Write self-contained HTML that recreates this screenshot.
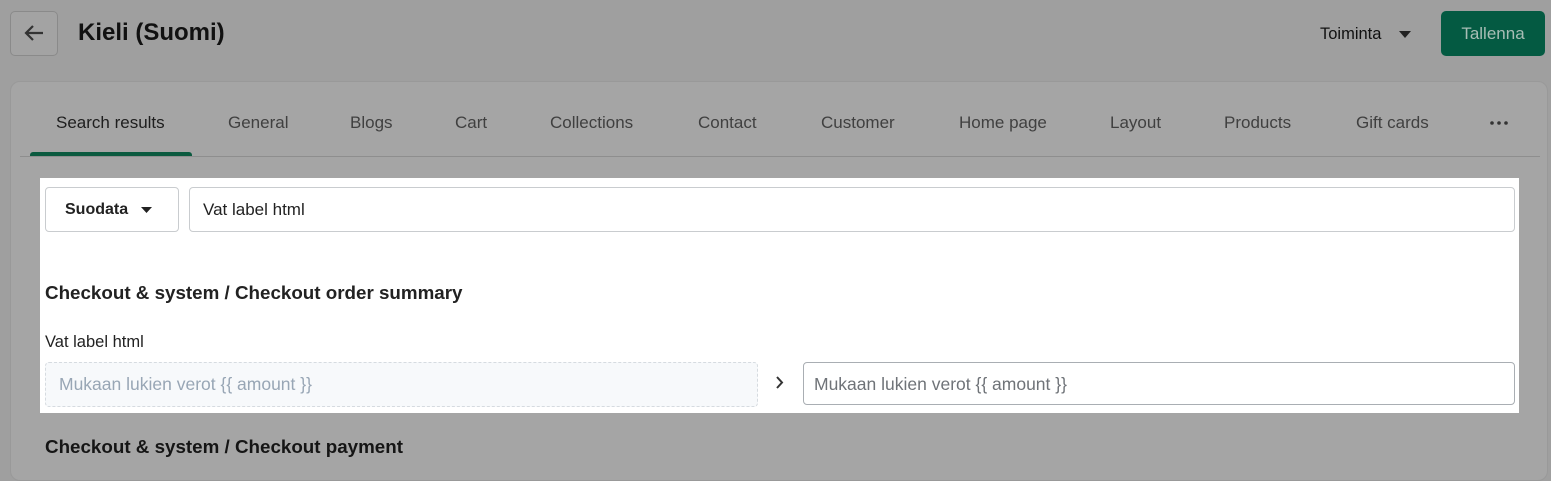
<!DOCTYPE html>
<html><head><meta charset="utf-8"><style>
*{box-sizing:border-box;margin:0;padding:0}
body{width:1551px;height:470px;overflow:hidden;background:#9f9f9f;font-family:"Liberation Sans",sans-serif;position:relative;color:#1a1a1a}
.a{position:absolute}
.back{left:10px;top:11px;width:48px;height:45px;border:1px solid #8a8a8a;border-radius:5px;background:#a3a3a3}
.title{left:78px;top:19px;font-size:24px;font-weight:bold;color:#111}
.card{left:10px;top:81px;width:1538px;height:400px;background:#a5a5a5;border-radius:10px;border:1px solid #999}
.tab{top:113px;font-size:17px;color:#404040}
.sel{left:30px;top:152px;width:162px;height:4px;background:#0b5a3f;border-radius:3px 3px 0 0}
.line{left:20px;top:156px;width:1520px;height:1px;background:#8e8e8e}
.hl{left:40px;top:178px;width:1479px;height:235px;background:#fff}
.box{border:1px solid #c9cccf;border-radius:4px;background:#fff}
</style></head><body>
<div class="a back"><svg width="46" height="43" viewBox="0 0 46 43"><path d="M32 21H15M22 14l-7 7 7 7" stroke="#333" stroke-width="2.2" fill="none"/></svg></div>
<div class="a title">Kieli (Suomi)</div>
<div class="a" style="left:1320px;top:25px;font-size:16.5px;color:#111">Toiminta</div>
<svg class="a" style="left:1399px;top:31px" width="12" height="7"><path d="M0 0h12L6 7z" fill="#222"/></svg>
<div class="a" style="left:1441px;top:11px;width:104px;height:45px;background:#045a42;border-radius:5px;color:#a8bdb5;font-size:17px;text-align:center;line-height:45px">Tallenna</div>
<div class="a card"></div>
<div class="a tab" style="left:56px;color:#1e1e1e">Search results</div>
<div class="a tab" style="left:228px">General</div>
<div class="a tab" style="left:350px">Blogs</div>
<div class="a tab" style="left:455px">Cart</div>
<div class="a tab" style="left:550px">Collections</div>
<div class="a tab" style="left:698px">Contact</div>
<div class="a tab" style="left:821px">Customer</div>
<div class="a tab" style="left:959px">Home page</div>
<div class="a tab" style="left:1110px">Layout</div>
<div class="a tab" style="left:1224px">Products</div>
<div class="a tab" style="left:1356px">Gift cards</div>
<svg class="a" style="left:1490px;top:121px" width="18" height="4"><circle cx="2" cy="2" r="1.8" fill="#333"/><circle cx="9" cy="2" r="1.8" fill="#333"/><circle cx="16" cy="2" r="1.8" fill="#333"/></svg>
<div class="a sel"></div><div class="a line"></div>
<div class="a hl"></div>
<div class="a box" style="left:45px;top:187px;width:134px;height:45px"></div>
<div class="a" style="left:65px;top:201px;font-size:16px;font-weight:bold;color:#222">Suodata</div>
<svg class="a" style="left:141px;top:207px" width="11" height="6"><path d="M0 0h11L5.5 6z" fill="#222"/></svg>
<div class="a box" style="left:189px;top:187px;width:1326px;height:45px"></div>
<div class="a" style="left:203px;top:200px;font-size:17px;color:#222">Vat label html</div>
<div class="a" style="left:45px;top:282px;font-size:18.8px;font-weight:bold;color:#222">Checkout &amp; system / Checkout order summary</div>
<div class="a" style="left:45px;top:333px;font-size:16.5px;color:#222">Vat label html</div>
<div class="a" style="left:45px;top:362px;width:713px;height:45px;border:1px dashed #d6dbe0;border-radius:4px;background:#f7f9fb"></div>
<div class="a" style="left:59px;top:374px;font-size:17.5px;color:#98a6b5">Mukaan lukien verot {{ amount }}</div>
<svg class="a" style="left:776px;top:376px" width="8" height="13"><path d="M1 1l5 5.5L1 12" stroke="#333" stroke-width="2" fill="none"/></svg>
<div class="a box" style="left:803px;top:362px;width:712px;height:43px;border-color:#a9aeb3"></div>
<div class="a" style="left:814px;top:374px;font-size:17.5px;color:#6f7378">Mukaan lukien verot {{ amount }}</div>
<div class="a" style="left:45px;top:436px;font-size:18.8px;font-weight:bold;color:#151515">Checkout &amp; system / Checkout payment</div>
</body></html>
